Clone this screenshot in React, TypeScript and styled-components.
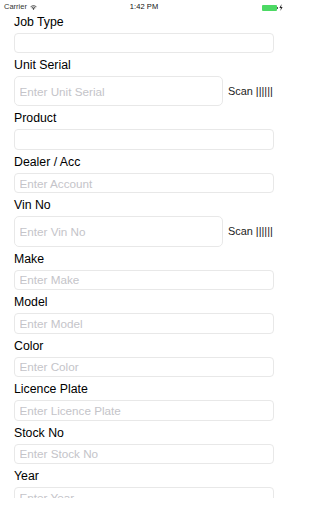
import React from 'react';
import styled, { createGlobalStyle } from 'styled-components';

const GlobalStyle = createGlobalStyle`
  html, body {
    margin: 0;
    padding: 0;
    background: #fff;
  }
  body {
    font-family: "Liberation Sans", Arial, sans-serif;
  }
  * {
    box-sizing: border-box;
  }
`;

const Screen = styled.div`
  width: 288px;
  height: 512px;
  display: flex;
  flex-direction: column;
  background: #fff;
  overflow: hidden;
`;

const StatusBar = styled.div`
  height: 9.5px;
  flex: none;
  display: grid;
  grid-template-columns: 1fr auto 1fr;
  align-items: start;
  padding: 3px 4px 0 4px;
  font-size: 7.5px;
  line-height: 8px;
  color: #000;
  position: relative;
  z-index: 1;
`;

const Carrier = styled.div`
  display: flex;
  align-items: center;
  gap: 3px;
  color: #333;
`;

const Time = styled.div`
  color: #111;
  letter-spacing: 0.1px;
`;

const BatteryGroup = styled.div`
  justify-self: end;
  display: flex;
  align-items: center;
  margin-top: 1px;
  padding-right: 1px;
`;

const BatteryBody = styled.div`
  width: 15px;
  height: 6px;
  background: #4cd964;
  border-radius: 1px;
`;

const BatteryNub = styled.div`
  width: 1px;
  height: 2px;
  background: #555;
  margin-right: 1.5px;
`;

const Form = styled.div`
  flex: 1;
  overflow: hidden;
  padding: 0 14px;
`;

const Field = styled.div`
  display: block;
`;

const Label = styled.div`
  height: 23px;
  padding-top: 1px;
  line-height: 22px;
  font-size: 12.3px;
  color: #000;
`;

const Row = styled.div`
  display: flex;
  align-items: center;
  gap: 5px;
`;

const Input = styled.input<{ $tall?: boolean }>`
  flex: 1;
  min-width: 0;
  height: ${p => (p.$tall ? 30.3 : 20.5)}px;
  border: 1px solid #e8e8e8;
  border-radius: ${p => (p.$tall ? 5 : 4)}px;
  padding: 0 4.5px;
  font-size: 11.7px;
  font-family: inherit;
  color: #000;
  background: #fff;
  outline: none;
  margin: 0;

  &::placeholder {
    color: #c4c4c9;
  }
`;

const ScanLabel = styled.div`
  width: 46px;
  font-size: 10.9px;
  color: #222;
  white-space: nowrap;
`;

const Footer = styled.div`
  height: 14px;
  flex: none;
`;

const Wifi = () => (
  <svg width="7" height="5" viewBox="0 0 14 10">
    <path d="M7 10 L4.6 7.2 A3.6 3.6 0 0 1 9.4 7.2 Z" fill="#333" />
    <path d="M3.2 5.6 A5.8 5.8 0 0 1 10.8 5.6" stroke="#333" strokeWidth="1.6" fill="none" />
    <path d="M1.2 3.4 A8.8 8.8 0 0 1 12.8 3.4" stroke="#333" strokeWidth="1.6" fill="none" />
  </svg>
);

const Bolt = () => (
  <svg width="4" height="7" viewBox="0 0 4 7">
    <path d="M2.6 0 L0.4 3.9 H1.9 L1.4 7 L3.6 3.1 H2.1 Z" fill="#222" />
  </svg>
);

interface FieldDef {
  label: string;
  placeholder?: string;
  scan?: boolean;
}

const fields: FieldDef[] = [
  { label: 'Job Type' },
  { label: 'Unit Serial', placeholder: 'Enter Unit Serial', scan: true },
  { label: 'Product' },
  { label: 'Dealer / Acc', placeholder: 'Enter Account' },
  { label: 'Vin No', placeholder: 'Enter Vin No', scan: true },
  { label: 'Make', placeholder: 'Enter Make' },
  { label: 'Model', placeholder: 'Enter Model' },
  { label: 'Color', placeholder: 'Enter Color' },
  { label: 'Licence Plate', placeholder: 'Enter Licence Plate' },
  { label: 'Stock No', placeholder: 'Enter Stock No' },
  { label: 'Year', placeholder: 'Enter Year' },
];

const App: React.FC = () => {
  return (
    <>
      <GlobalStyle />
      <Screen>
        <StatusBar>
          <Carrier>
            Carrier
            <Wifi />
          </Carrier>
          <Time>1:42 PM</Time>
          <BatteryGroup>
            <BatteryBody />
            <BatteryNub />
            <Bolt />
          </BatteryGroup>
        </StatusBar>

        <Form>
          {fields.map(f => (
            <Field key={f.label}>
              <Label>{f.label}</Label>
              <Row>
                <Input $tall={f.scan} placeholder={f.placeholder} />
                {f.scan && <ScanLabel>Scan ||||||</ScanLabel>}
              </Row>
            </Field>
          ))}
        </Form>
        <Footer />
      </Screen>
    </>
  );
};

export default App;
